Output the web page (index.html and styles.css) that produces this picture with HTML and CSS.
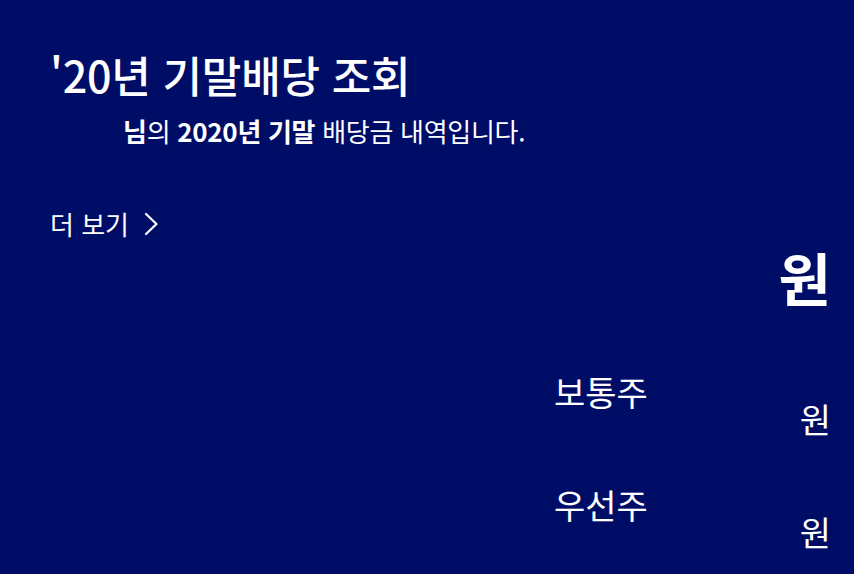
FILE: index.html
```html
<!DOCTYPE html>
<html lang="ko">
<head>
    <meta charset="UTF-8">
    <meta name="viewport" content="width=device-width, initial-scale=1.0">
    <title>'20년 기말배당 조회</title>
    <link rel="stylesheet" href="styles.css">
</head>
<body>
    <div class="page">
        <h1 class="title">'20년 기말배당 조회</h1>
        <p class="intro"><span class="name"></span><b>님</b>의 <b>2020년 기말</b> 배당금 내역입니다.</p>

        <a class="more" href="#">더 보기
            <svg class="chevron" width="14" height="24" viewBox="0 0 14 24"><path d="M2 2 L12.5 12 L2 22" fill="none" stroke="#fff" stroke-width="2.2" stroke-linecap="round" stroke-linejoin="round"/></svg>
        </a>

        <div class="total">
            <span class="amount"></span><span class="unit">원</span>
        </div>

        <div class="breakdown">
            <div class="row">
                <span class="label">보통주</span>
                <span class="value">원</span>
            </div>
            <div class="row">
                <span class="label">우선주</span>
                <span class="value">원</span>
            </div>
        </div>
    </div>
</body>
</html>
```

FILE: styles.css
```css
html, body {
    margin: 0;
    height: 100%;
}
body {
    background: #000d66;
    color: #fff;
    font-family: "Noto Sans CJK KR", "Noto Sans", sans-serif;
    overflow: hidden;
}
.page {
    padding: 44px 23px 0 50px;
}
.title {
    margin: 0;
    font-size: 43px;
    font-weight: 500;
    line-height: 60px;
    letter-spacing: -0.2px;
}
.intro {
    margin: 9px 0 0;
    padding-left: 73px;
    font-size: 26px;
    line-height: 36px;
    letter-spacing: -0.3px;
}
.intro b {
    font-weight: 700;
}
.more {
    display: inline-flex;
    align-items: center;
    gap: 15px;
    margin-top: 57px;
    color: #fff;
    text-decoration: none;
    font-size: 26px;
    line-height: 36px;
}
.total {
    display: flex;
    justify-content: flex-end;
    margin-top: -6px;
}
.unit {
    font-size: 57px;
    font-weight: 700;
    line-height: 80px;
}
.breakdown {
    margin-left: 504px;
    margin-top: 53px;
    display: flex;
    flex-direction: column;
    gap: 40px;
}
.row {
    display: flex;
    justify-content: space-between;
    align-items: flex-start;
}
.label {
    font-size: 34px;
    line-height: 46px;
}
.value {
    font-size: 34px;
    line-height: 46px;
    padding-top: 27px;
}
```
